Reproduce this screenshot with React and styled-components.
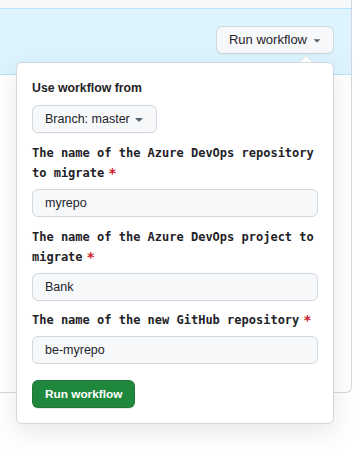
import React from "react";
import styled, { createGlobalStyle } from "styled-components";

const Global = createGlobalStyle`
  html, body { margin: 0; padding: 0; background: #ffffff; }
  body { font-family: "Liberation Sans", Arial, sans-serif; color: #1f2328; }
  * { box-sizing: border-box; }
`;

const Page = styled.div`
  position: relative;
  width: 359px;
  height: 450px;
  overflow: hidden;
  background: #ffffff;
`;

const Card = styled.div`
  width: 352px;
  border-right: 1px solid #d0d7de;
  border-bottom: 1px solid #d0d7de;
  border-bottom-right-radius: 6px;
  overflow: hidden;
`;

const TopStrip = styled.div`
  height: 9px;
  background: #f6f8fa;
  border-bottom: 1px solid #b6e3ff;
`;

const Banner = styled.div`
  height: 66px;
  background: #ddf4ff;
  border-bottom: 1px solid #b6e3ff;
  display: flex;
  justify-content: flex-end;
  align-items: flex-start;
  padding: 17px 17px 0 0;
`;

const CardBody = styled.div`
  height: 317px;
`;

const Button = styled.button`
  display: inline-flex;
  align-items: center;
  height: 28px;
  padding: ${(p) => p.$pad || "0 12px"};
  gap: ${(p) => p.$gap || "0px"};
  border: 1px solid ${(p) => (p.$primary ? "rgba(31,35,40,0.15)" : "#d0d7de")};
  border-radius: 6px;
  background: ${(p) => (p.$primary ? "#1f883d" : "#f6f8fa")};
  color: ${(p) => (p.$primary ? "#ffffff" : "#1f2328")};
  font-family: "Liberation Sans", Arial, sans-serif;
  font-size: ${(p) => p.$size || "12.5px"};
  font-weight: ${(p) => (p.$primary ? 700 : 400)};
  line-height: 20px;
  white-space: nowrap;
  cursor: pointer;
  box-shadow: ${(p) => (p.$primary ? "0 1px 0 rgba(31,35,40,0.1)" : "0 1px 0 rgba(31,35,40,0.04)")};
`;

const Caret = styled.svg`
  flex: none;
  fill: ${(p) => p.$color || "#59636e"};
`;

const Popover = styled.div`
  position: absolute;
  left: 16px;
  top: 62px;
  width: 318px;
  background: #ffffff;
  border: 1px solid #d0d7de;
  border-radius: 6px;
  box-shadow: 0 8px 24px rgba(140, 149, 159, 0.22);
  padding: 15px;
  display: flex;
  flex-direction: column;
  align-items: flex-start;

  &::before,
  &::after {
    content: "";
    position: absolute;
    width: 0;
    height: 0;
    border-style: solid;
    border-color: transparent;
  }
  &::before {
    top: -15px;
    right: 20px;
    border-width: 7px;
    border-bottom-color: #d0d7de;
  }
  &::after {
    top: -13px;
    right: 21px;
    border-width: 6px;
    border-bottom-color: #ffffff;
  }
`;

const Heading = styled.div`
  font-size: 12.3px;
  font-weight: 700;
  line-height: 20px;
  margin-bottom: 7px;
`;

const Field = styled.div`
  width: 100%;
  margin-top: ${(p) => p.$top || "9.5px"};
  display: flex;
  flex-direction: column;
  gap: 6px;
`;

const Label = styled.label`
  font-family: "DejaVu Sans Mono", "Liberation Mono", monospace;
  font-weight: 700;
  font-size: 12px;
  line-height: 20px;
  color: #1f2328;
`;

const Required = styled.span`
  display: inline-block;
  margin-left: 4px;
  height: 9px;
  line-height: 14px;
  vertical-align: -1px;
  overflow: visible;
  color: #cf222e;
  font-family: "DejaVu Sans Mono", monospace;
  font-size: 14px;
  font-weight: 700;
`;

const Input = styled.input`
  width: 100%;
  height: 28px;
  padding: 0 12px;
  border: 1px solid #d0d7de;
  border-radius: 6px;
  background: #f6f8fa;
  color: #1f2328;
  font-family: "Liberation Sans", Arial, sans-serif;
  font-size: 12.5px;
  outline: none;
`;

const Actions = styled.div`
  margin-top: 16px;
`;

const TriangleDown = ({ size = 16, color }) => (
  <Caret $color={color} width={size} height={size} viewBox="0 0 16 16" aria-hidden="true">
    <path d="m4.427 7.427 3.396 3.396a.25.25 0 0 0 .354 0l3.396-3.396A.25.25 0 0 0 11.396 7H4.604a.25.25 0 0 0-.177.427Z" />
  </Caret>
);

const fields = [
  { label: "The name of the Azure DevOps repository to migrate", value: "myrepo", top: "10px" },
  { label: "The name of the Azure DevOps project to migrate", value: "Bank" },
  { label: "The name of the new GitHub repository", value: "be-myrepo" },
];

export default function App() {
  return (
    <Page>
      <Global />
      <Card>
        <TopStrip />
        <Banner>
          <Button $size="13px" $pad="0 9px 0 12px" $gap="3px">
            Run workflow
            <TriangleDown size={14} color="#59636e" />
          </Button>
        </Banner>
        <CardBody />
      </Card>
      <Popover>
        <Heading>Use workflow from</Heading>
        <Button $pad="0 9px 0 12px" $gap="1px">
          Branch: master
          <TriangleDown size={16} color="#59636e" />
        </Button>
        {fields.map((f) => (
          <Field key={f.label} $top={f.top}>
            <Label>
              {f.label}
              <Required>*</Required>
            </Label>
            <Input defaultValue={f.value} />
          </Field>
        ))}
        <Actions>
          <Button $primary $size="11.8px" $pad="0 12px">
            Run workflow
          </Button>
        </Actions>
      </Popover>
    </Page>
  );
}
